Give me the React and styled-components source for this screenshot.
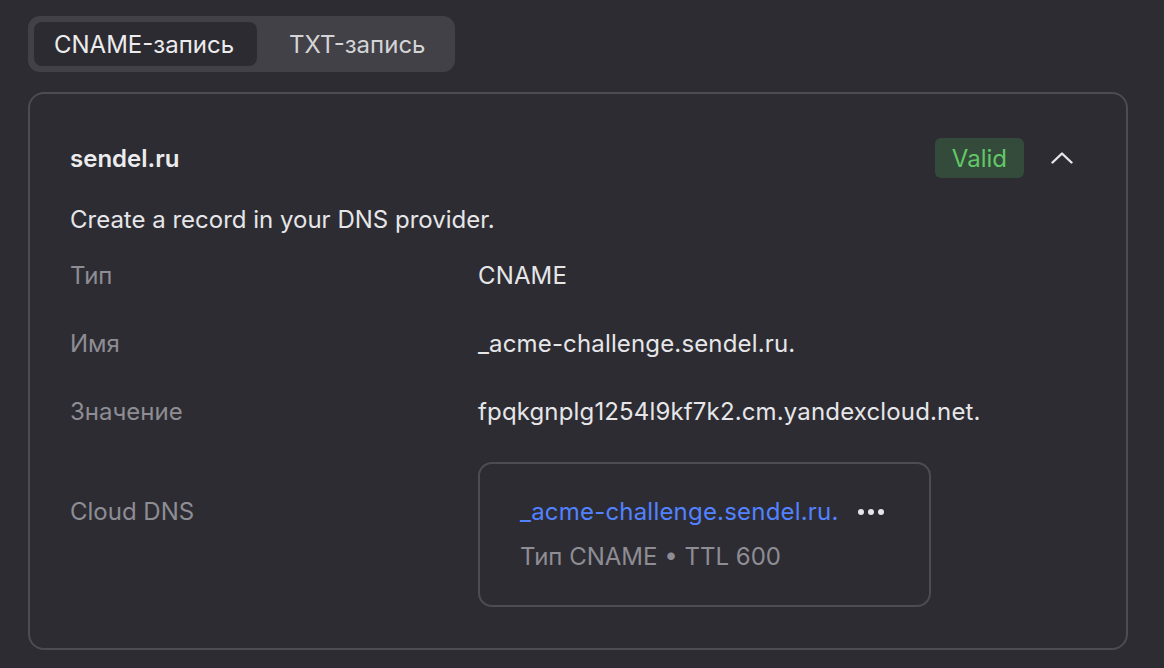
import React from "react";
import styled, { createGlobalStyle } from "styled-components";

const Global = createGlobalStyle`
  html, body { margin: 0; padding: 0; background: #2d2c33; }
  body { font-family: Inter, "Noto Sans", sans-serif; color: #e6e6e8; }
`;

const Page = styled.div`
  width: 1164px;
  height: 668px;
  box-sizing: border-box;
  padding: 16px 36px 0 28px;
  display: flex;
  flex-direction: column;
  align-items: flex-start;
  gap: 20px;
`;

const Tabs = styled.div`
  display: flex;
  gap: 12px;
  padding: 6px;
  border-radius: 12px;
  background: #424147;
`;

const Tab = styled.button`
  height: 44px;
  padding: 0 23px 0 20px;
  border: none;
  border-radius: 8px;
  font: inherit;
  font-size: 24px;
  color: ${(p) => (p.$active ? "#ececee" : "#d4d4d6")};
  background: ${(p) => (p.$active ? "#2c2b31" : "transparent")};
  cursor: pointer;
`;

const Card = styled.section`
  align-self: stretch;
  border: 2px solid #4d4c53;
  border-radius: 16px;
  padding: 44px 40px 41px 40px;
  display: flex;
  flex-direction: column;
`;

const Header = styled.div`
  display: flex;
  align-items: center;
  height: 40px;
`;

const Domain = styled.div`
  flex: 1;
  font-size: 24px;
  font-weight: 600;
  color: #ececee;
`;

const Badge = styled.span`
  height: 40px;
  padding: 0 17px;
  display: inline-flex;
  align-items: center;
  border-radius: 6px;
  background: #344a3a;
  color: #62c766;
  font-size: 24px;
`;

const Toggle = styled.button`
  margin-left: 22px;
  margin-right: 8px;
  width: 32px;
  height: 32px;
  padding: 0;
  border: none;
  background: transparent;
  display: flex;
  align-items: center;
  justify-content: center;
  color: #e6e6e8;
`;

const Description = styled.p`
  margin: 28px 0 0;
  font-size: 24px;
  line-height: 28px;
  color: #e6e6e8;
`;

const Fields = styled.dl`
  margin: 28px 0 0;
  display: grid;
  grid-template-columns: 408px 1fr;
  row-gap: 40px;
  font-size: 24px;
  line-height: 28px;
`;

const Label = styled.dt`
  color: #8e8d93;
  padding-top: ${(p) => p.$offset || 0}px;
`;

const Value = styled.dd`
  margin: 0;
  color: #e6e6e8;
  letter-spacing: 0.15px;
  margin-top: ${(p) => p.$shift || 0}px;
`;

const DnsBox = styled.div`
  display: inline-flex;
  flex-direction: column;
  gap: 17px;
  border: 2px solid #4d4c53;
  border-radius: 14px;
  padding: 34px 44px 34px 40px;
  letter-spacing: 0;
`;

const DnsTop = styled.div`
  display: flex;
  align-items: center;
  gap: 18px;
`;

const Link = styled.a`
  color: #5282ff;
  text-decoration: none;
  letter-spacing: 0.2px;
`;

const Meta = styled.div`
  color: #8e8d93;
`;

const Chevron = () => (
  <svg width="22" height="12" viewBox="0 0 22 12" fill="none">
    <path d="M1.5 10.5 L11 1.5 L20.5 10.5" stroke="currentColor" strokeWidth="2.4" strokeLinecap="round" strokeLinejoin="round" />
  </svg>
);

const Dots = () => (
  <svg width="28" height="8" viewBox="0 0 28 8" fill="#e6e6e8">
    <circle cx="4" cy="4" r="3" />
    <circle cx="14" cy="4" r="3" />
    <circle cx="24" cy="4" r="3" />
  </svg>
);

export default function App() {
  return (
    <>
      <Global />
      <Page>
        <Tabs>
          <Tab $active>CNAME-запись</Tab>
          <Tab>TXT-запись</Tab>
        </Tabs>
        <Card>
          <Header>
            <Domain>sendel.ru</Domain>
            <Badge>Valid</Badge>
            <Toggle aria-label="Свернуть">
              <Chevron />
            </Toggle>
          </Header>
          <Description>Create a record in your DNS provider.</Description>
          <Fields>
            <Label>Тип</Label>
            <Value>CNAME</Value>
            <Label>Имя</Label>
            <Value>_acme-challenge.sendel.ru.</Value>
            <Label>Значение</Label>
            <Value>fpqkgnplg1254l9kf7k2.cm.yandexcloud.net.</Value>
            <Label $offset={32}>Cloud DNS</Label>
            <Value $shift={-4}>
              <DnsBox>
                <DnsTop>
                  <Link href="#">_acme-challenge.sendel.ru.</Link>
                  <Dots />
                </DnsTop>
                <Meta>Тип CNAME • TTL 600</Meta>
              </DnsBox>
            </Value>
          </Fields>
        </Card>
      </Page>
    </>
  );
}
